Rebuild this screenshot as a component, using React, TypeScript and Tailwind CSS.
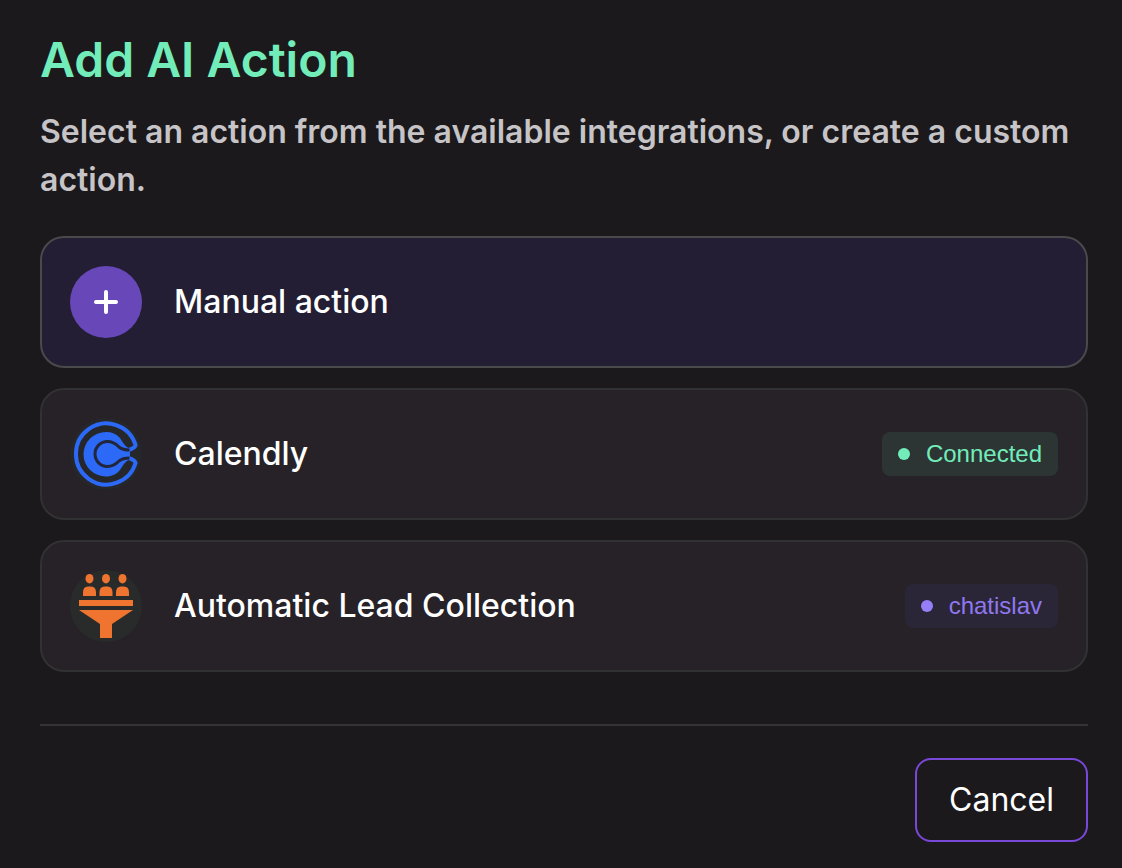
import React from 'react';

const ManualIcon = () => (
  <svg viewBox="0 0 72 72" className="size-18 shrink-0" aria-hidden="true">
    <circle cx="36" cy="36" r="36" fill="#6848b8" />
    <path d="M36 26v20M26 36h20" stroke="#fff" strokeWidth="4" strokeLinecap="round" />
  </svg>
);

const CalendlyIcon = () => (
  <svg viewBox="0 0 72 72" className="size-18 shrink-0" fill="none" aria-hidden="true">
    <circle cx="36" cy="36" r="36" fill="#26272a" />
    {/* Outer ring */}
    <path
      d="M58.500 32C62 31 65 29.500 65.600 27A30.500 30.500 0 1 0 65.600 45C65 42.500 62 41 58.500 40"
      stroke="#2c69f6"
      strokeWidth="4"
      strokeLinejoin="round"
    />
    {/* Inner C */}
    <path
      d="M36 14C42 14 46.500 16 49.500 19.500C52.500 23 53 27 60 31V41C53 45 52.500 49 49.500 52.500C46.500 56 42 58.500 36 58.500A22.500 22.250 0 0 1 36 14Z"
      fill="#2c69f6"
    />
    <path
      d="M59.500 32C54 32 52 31.500 49 29C46 26 43 23.500 37.500 23.500A12.500 12.500 0 0 0 37.500 48.500C43 48.500 46 46 49 43C52 40.500 54 40 59.500 40"
      stroke="#22263a"
      strokeWidth="3"
    />
  </svg>
);

const LeadIcon = () => (
  <svg viewBox="0 0 72 72" className="size-18 shrink-0" aria-hidden="true">
    <circle cx="36" cy="36" r="36" fill="#292a2a" />
    <g fill="#ee7430">
      {[19.5, 36, 52.5].map((x) => (
        <g key={x}>
          <ellipse cx={x} cy="8.700" rx="4" ry="4.800" />
          <path d={`M${x - 6.5} 26v-3.500q0-6 5-6h3q5 0 5 6v3.500z`} />
        </g>
      ))}
      <path d="M9 30h54v6H9zM9 40h54L42 54v14H30V54z" />
    </g>
  </svg>
);

const actions = [
  {
    name: 'Manual action',
    icon: ManualIcon,
    card: 'bg-[#231e34] border-[#4a494c]',
  },
  {
    name: 'Calendly',
    icon: CalendlyIcon,
    card: 'bg-[#262227] border-[#323134]',
    badge: { label: 'Connected', color: 'bg-[#2c3534] text-[#72edba]', dot: 'bg-[#72edba]' },
  },
  {
    name: 'Automatic Lead Collection',
    icon: LeadIcon,
    card: 'bg-[#262227] border-[#323134]',
    badge: { label: 'chatislav', color: 'bg-[#2b2538] text-[#8f78ee]', dot: 'bg-[#967ff8]' },
  },
];

export default function App() {
  return (
    <main className="min-h-screen bg-[#1b191c] pt-8 pr-[34px] pb-6 pl-10 font-['Inter',sans-serif]">
      {/* Header */}
      <h1 className="text-5xl leading-14 font-semibold text-[#72edba]">Add AI Action</h1>
      <p className="mt-5 text-[32px] leading-12 font-semibold text-[#c6c4c6]">
        Select an action from the available integrations, or create a custom action.
      </p>

      {/* Actions */}
      <div className="mt-8 flex flex-col gap-5">
        {actions.map(({ name, icon: Icon, card, badge }) => (
          <button
            key={name}
            type="button"
            className={`flex items-center gap-8 rounded-3xl border-2 p-7 text-left cursor-pointer ${card}`}
          >
            <Icon />
            <span className="grow text-[32px] leading-10 font-medium text-white">{name}</span>
            {badge && (
              <span
                className={`flex h-11 items-center gap-4 rounded-lg px-4 font-['Liberation_Sans',sans-serif] text-2xl ${badge.color}`}
              >
                <span className={`size-3 rounded-full ${badge.dot}`} />
                {badge.label}
              </span>
            )}
          </button>
        ))}
      </div>

      {/* Footer */}
      <div className="mt-[52px] flex justify-end border-t-2 border-[#343336] pt-8">
        <button
          type="button"
          className="rounded-2xl border-2 border-[#7a48d8] px-8 py-5 text-[32px] leading-10 text-white cursor-pointer"
        >
          Cancel
        </button>
      </div>
    </main>
  );
}
